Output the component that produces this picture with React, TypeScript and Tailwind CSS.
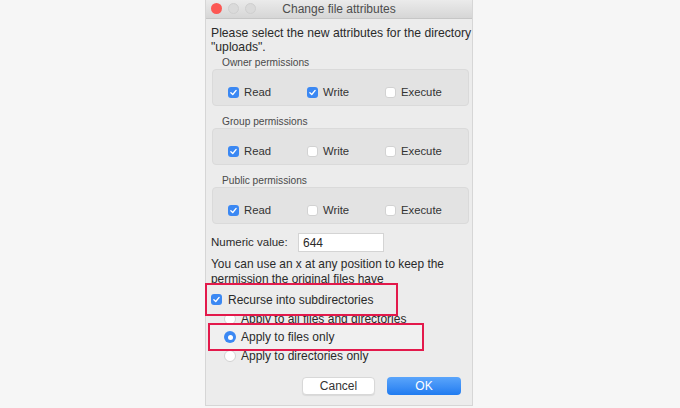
import React from "react";

const Check = ({ on }: { on: boolean }) =>
  on ? (
    <span className="flex h-[11px] w-[11px] shrink-0 items-center justify-center rounded-[3px] bg-[#3b88f3]">
      <svg viewBox="0 0 12 12" className="h-[9px] w-[9px]">
        <path d="M2.5 6.3 L5 8.6 L9.5 3.2" fill="none" stroke="#fff" strokeWidth="1.8" strokeLinecap="round" strokeLinejoin="round" />
      </svg>
    </span>
  ) : (
    <span className="h-[11px] w-[11px] shrink-0 rounded-[3px] border border-[#d2d2d2] bg-white" />
  );

const Radio = ({ on }: { on: boolean }) =>
  on ? (
    <span className="flex h-[12px] w-[12px] shrink-0 items-center justify-center rounded-full bg-[#3b88f3]">
      <span className="h-[5px] w-[5px] rounded-full bg-white" />
    </span>
  ) : (
    <span className="h-[12px] w-[12px] shrink-0 rounded-full border border-[#d2d2d2] bg-white" />
  );

const Group = ({ label, perms, first }: { label: string; perms: boolean[]; first?: boolean }) => (
  <div className={first ? "mt-[2px]" : "mt-[9px]"}>
    <div className="h-[13px] pl-[11px] text-[10.2px] leading-[13px] text-[#4a4a4a]">{label}</div>
    <div className="ml-[1px] mr-[3px] grid h-[37px] grid-cols-[79px_78px_auto] items-center rounded-[4px] border border-[#dadada] bg-[#e3e3e3] pl-[15px] pt-[9px]">
      {["Read", "Write", "Execute"].map((n, i) => (
        <div key={n} className="flex items-center gap-[5px] text-[11.3px] text-[#333]">
          <Check on={perms[i]} />
          <span>{n}</span>
        </div>
      ))}
    </div>
  </div>
);

export default function App() {
  return (
    <div className="flex h-[408px] w-full bg-[#f6f6f6]" style={{ fontFamily: '"Liberation Sans", Arial, sans-serif' }}>
      <div className="ml-[205px] flex h-[406px] w-[268px] flex-col border-x border-b border-[#d6d6d6] bg-[#ececec] text-[#2a2a2a]">
        {/* title bar */}
        <div className="relative flex h-[19px] shrink-0 items-center justify-center border-b border-[#c6c6c6] bg-gradient-to-b from-[#ebebeb] to-[#d6d6d6]">
          <div className="absolute left-[5px] top-[3px] flex gap-[6px]">
            <span className="h-[11px] w-[11px] rounded-full bg-[#fc5753]" />
            <span className="h-[11px] w-[11px] rounded-full border border-[#cfcfcf] bg-[#dadada]" />
            <span className="h-[11px] w-[11px] rounded-full border border-[#cfcfcf] bg-[#dadada]" />
          </div>
          <span className="text-[12px] text-[#4d4d4d]">Change file attributes</span>
        </div>

        <div className="flex flex-col pl-[5px]">
          <p className="mt-[7px] text-[12.2px] leading-[14px]">
            Please select the new attributes for the directory
            <br />
            "uploads".
          </p>

          <Group first label="Owner permissions" perms={[true, true, false]} />
          <Group label="Group permissions" perms={[true, false, false]} />
          <Group label="Public permissions" perms={[true, false, false]} />

          <div className="mt-[9px] flex h-[19px] items-center">
            <span className="w-[87px] text-[11.5px]">Numeric value:</span>
            <div className="flex h-[19px] w-[86px] items-center border border-[#d4d4d4] bg-white pl-[4px] text-[12px]">644</div>
          </div>

          <p className="mt-[5px] text-[11.9px] leading-[15px]">
            You can use an x at any position to keep the
            <br />
            permission the original files have
          </p>

          <div className="relative -ml-[6px] -mt-[4px] flex h-[33px] w-[193px] items-center gap-[6px] border-2 border-[#e3194b] bg-[#ececec] pl-[4px] text-[12px]">
            <Check on={true} />
            <span>Recurse into subdirectories</span>
          </div>

          <div className="-mt-[4px] ml-[13px] flex h-[14px] items-center gap-[5px] text-[12px] leading-[14px]">
            <Radio on={false} />
            <span>Apply to all files and directories</span>
          </div>

          <div className="relative -ml-[3px] -mt-[3px] flex h-[28px] w-[216px] items-center gap-[5px] border-2 border-[#e3194b] bg-[#f0f0f0] pl-[14px] text-[12px]">
            <Radio on={true} />
            <span>Apply to files only</span>
          </div>

          <div className="-mt-[2px] ml-[13px] flex h-[14px] items-center gap-[5px] text-[12px] leading-[14px]">
            <Radio on={false} />
            <span>Apply to directories only</span>
          </div>

          <div className="mt-[14px] flex justify-end gap-[12px] pr-[11px]">
            <button className="flex h-[18px] w-[73px] items-center justify-center rounded-[4px] border border-[#d8d8d8] bg-white text-[12px] text-[#333] shadow-[0_1px_1px_rgba(0,0,0,0.08)]">
              Cancel
            </button>
            <button className="flex h-[18px] w-[74px] items-center justify-center rounded-[4px] bg-gradient-to-b from-[#5aa5fb] to-[#1f7bf0] text-[12px] text-white">
              OK
            </button>
          </div>
        </div>
      </div>
    </div>
  );
}
